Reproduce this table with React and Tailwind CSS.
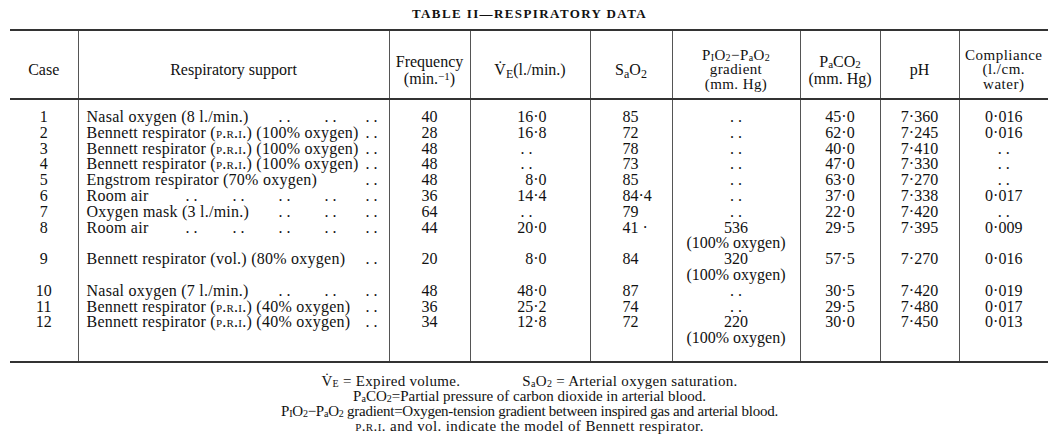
import React from "react";

const sc = "[font-variant-caps:small-caps]";

function Dots({ className = "" }) {
  return <span className={"whitespace-pre " + className}>. .</span>;
}

const tabCols = {
  2: "col-start-2",
  3: "col-start-3",
  4: "col-start-4",
  5: "col-start-5",
};

const pri = <span className={sc}>p.r.i.</span>;

const rows = [
  { c: "1", s: "Nasal oxygen (8 l./min.)", span: "col-span-3", tabs: [4, 5], f: "40", ve: "16·0", sa: "85", g: null, pa: "45·0", ph: "7·360", co: "0·016" },
  { c: "2", s: <>Bennett respirator ({pri}) (100% oxygen)</>, span: "col-span-5", tabs: [], f: "28", ve: "16·8", sa: "72", g: null, pa: "62·0", ph: "7·245", co: "0·016" },
  { c: "3", s: <>Bennett respirator ({pri}) (100% oxygen)</>, span: "col-span-5", tabs: [], f: "48", ve: null, sa: "78", g: null, pa: "40·0", ph: "7·410", co: null },
  { c: "4", s: <>Bennett respirator ({pri}) (100% oxygen)</>, span: "col-span-5", tabs: [], f: "48", ve: null, sa: "73", g: null, pa: "47·0", ph: "7·330", co: null },
  { c: "5", s: "Engstrom respirator (70% oxygen)", span: "col-span-5", tabs: [], f: "48", ve: "8·0", sa: "85", g: null, pa: "63·0", ph: "7·270", co: null },
  { c: "6", s: "Room air", span: "col-span-1", tabs: [2, 3, 4, 5], f: "36", ve: "14·4", sa: "84·4", g: null, pa: "37·0", ph: "7·338", co: "0·017" },
  { c: "7", s: "Oxygen mask (3 l./min.)", span: "col-span-3", tabs: [4, 5], f: "64", ve: null, sa: "79", g: null, pa: "22·0", ph: "7·420", co: null },
  { c: "8", s: "Room air", span: "col-span-1", tabs: [2, 3, 4, 5], f: "44", ve: "20·0", sa: "41 ·", g: ["536", "(100% oxygen)"], pa: "29·5", ph: "7·395", co: "0·009" },
  { c: "9", s: "Bennett respirator (vol.) (80% oxygen)", span: "col-span-5", tabs: [], f: "20", ve: "8·0", sa: "84", g: ["320", "(100% oxygen)"], pa: "57·5", ph: "7·270", co: "0·016" },
  { c: "10", s: "Nasal oxygen (7 l./min.)", span: "col-span-3", tabs: [4, 5], f: "48", ve: "48·0", sa: "87", g: null, pa: "30·5", ph: "7·420", co: "0·019" },
  { c: "11", s: <>Bennett respirator ({pri}) (40% oxygen)</>, span: "col-span-5", tabs: [], f: "36", ve: "25·2", sa: "74", g: null, pa: "29·5", ph: "7·480", co: "0·017" },
  { c: "12", s: <>Bennett respirator ({pri}) (40% oxygen)</>, span: "col-span-5", tabs: [], f: "34", ve: "12·8", sa: "72", g: ["220", "(100% oxygen)"], pa: "30·0", ph: "7·450", co: "0·013" },
];

const line = "border-l border-l-[#555]";
const td = "align-top p-0 leading-[15.8px] " + line;
// flatter sub/sup so stacked header lines don't collide
const tight = " [&_sub]:bottom-[-0.1em] [&_sub]:text-[11px] [&_sup]:top-[-0.35em] [&_sup]:text-[11px]";

function SpacerRow({ h, last }) {
  const b = last ? " border-b-2 border-b-[#333]" : "";
  return (
    <tr className={h}>
      <td className={"p-0" + b}></td>
      {Array.from({ length: 8 }).map((_, i) => (
        <td key={i} className={"p-0 " + line + b}></td>
      ))}
    </tr>
  );
}

export default function App() {
  const th = "h-[69px] p-0 pt-[10px] align-middle font-normal text-center border-t-2 border-t-[#333] border-b-2 border-b-[#333]";
  return (
    <div className="w-[1059px] h-[440px] bg-white text-[#111] font-['Liberation_Serif',serif]">
      <div className="pt-[6px] mb-[7px] text-center text-[13px] font-bold leading-[16px] tracking-[1.4px]">
        TABLE II—RESPIRATORY DATA
      </div>

      <table className="ml-[10px] w-[1038px] table-fixed border-collapse text-[16px]">
        <colgroup>
          <col className="w-[68px]" />
          <col className="w-[311px]" />
          <col className="w-[81px]" />
          <col className="w-[120px]" />
          <col className="w-[82px]" />
          <col className="w-[128px]" />
          <col className="w-[80px]" />
          <col className="w-[79px]" />
          <col className="w-[89px]" />
        </colgroup>
        <thead>
          <tr>
            <th className={th}>Case</th>
            <th className={th + " " + line}>Respiratory support</th>
            <th className={th + " " + line + " leading-[17px]" + tight}>
              Frequency<br />(min.<sup>−1</sup>)
            </th>
            <th className={th + " " + line}>
              V&#775;<sub>E</sub>(l./min.)
            </th>
            <th className={th + " " + line}>
              S<sub>a</sub>O<sub>2</sub>
            </th>
            <th className={th + " " + line + " text-[15px] leading-[14.5px] tracking-[0.4px] [&_sub]:bottom-[-0.1em] [&_sub]:text-[10px]"}>
              P<sub>I</sub>O<sub>2</sub>−P<sub>a</sub>O<sub>2</sub><br />gradient<br />(mm. Hg)
            </th>
            <th className={th + " " + line + " leading-[17px]" + tight}>
              P<sub>a</sub>CO<sub>2</sub><br />(mm. Hg)
            </th>
            <th className={th + " " + line}>pH</th>
            <th className={th + " " + line + " text-[15px] leading-[14.5px] tracking-[0.5px]"}>
              Compliance<br />(l./cm.<br />water)
            </th>
          </tr>
        </thead>
        <tbody>
          <SpacerRow h="h-[10px]" />
          {rows.map((r) => (
            <tr key={r.c}>
              <td className="align-top p-0 leading-[15.8px] text-center">{r.c}</td>
              <td className={td + " pl-[8px] pr-[11px]"}>
                <div className="grid grid-cols-[99px_47px_46px_46px_1fr_auto] whitespace-nowrap">
                  <span className={r.span + " tracking-[0.25px]"}>{r.s}</span>
                  {r.tabs.map((t) => (
                    <Dots key={t} className={tabCols[t]} />
                  ))}
                  <Dots className="col-start-6 justify-self-end" />
                </div>
              </td>
              <td className={td + " text-center"}>{r.f}</td>
              <td className={td + " text-right " + (r.ve ? "pr-[43px]" : "pr-[57px]")}>
                {r.ve ?? <Dots />}
              </td>
              <td className={td + " text-left pl-[32px]"}>{r.sa}</td>
              <td className={td + " text-center"}>
                {r.g ? (
                  <>
                    {r.g[0]}
                    <br />
                    {r.g[1]}
                  </>
                ) : (
                  <Dots />
                )}
              </td>
              <td className={td + " text-center"}>{r.pa}</td>
              <td className={td + " text-center"}>{r.ph}</td>
              <td className={td + " text-center"}>{r.co ?? <Dots />}</td>
            </tr>
          ))}
          <SpacerRow h="h-[16px]" last />
        </tbody>
      </table>

      {/* footnotes */}
      <div className="pt-[11px] text-center text-[15px] leading-[15px] [&_sub]:bottom-[-0.1em] [&_sub]:text-[10px]">
        <p className="tracking-[0.3px]">
          V&#775;<sub>E</sub> = Expired volume.
          <span className="ml-[62px]">
            S<sub>a</sub>O<sub>2</sub> = Arterial oxygen saturation.
          </span>
        </p>
        <p>
          P<sub>a</sub>CO<sub>2</sub>=Partial pressure of carbon dioxide in arterial blood.
        </p>
        <p className="tracking-[-0.25px]">
          P<sub>I</sub>O<sub>2</sub>−P<sub>a</sub>O<sub>2</sub> gradient=Oxygen-tension gradient between inspired gas and arterial blood.
        </p>
        <p className="tracking-[0.4px]">
          <span className={sc}>p.r.i.</span> and vol. indicate the model of Bennett respirator.
        </p>
      </div>
    </div>
  );
}
